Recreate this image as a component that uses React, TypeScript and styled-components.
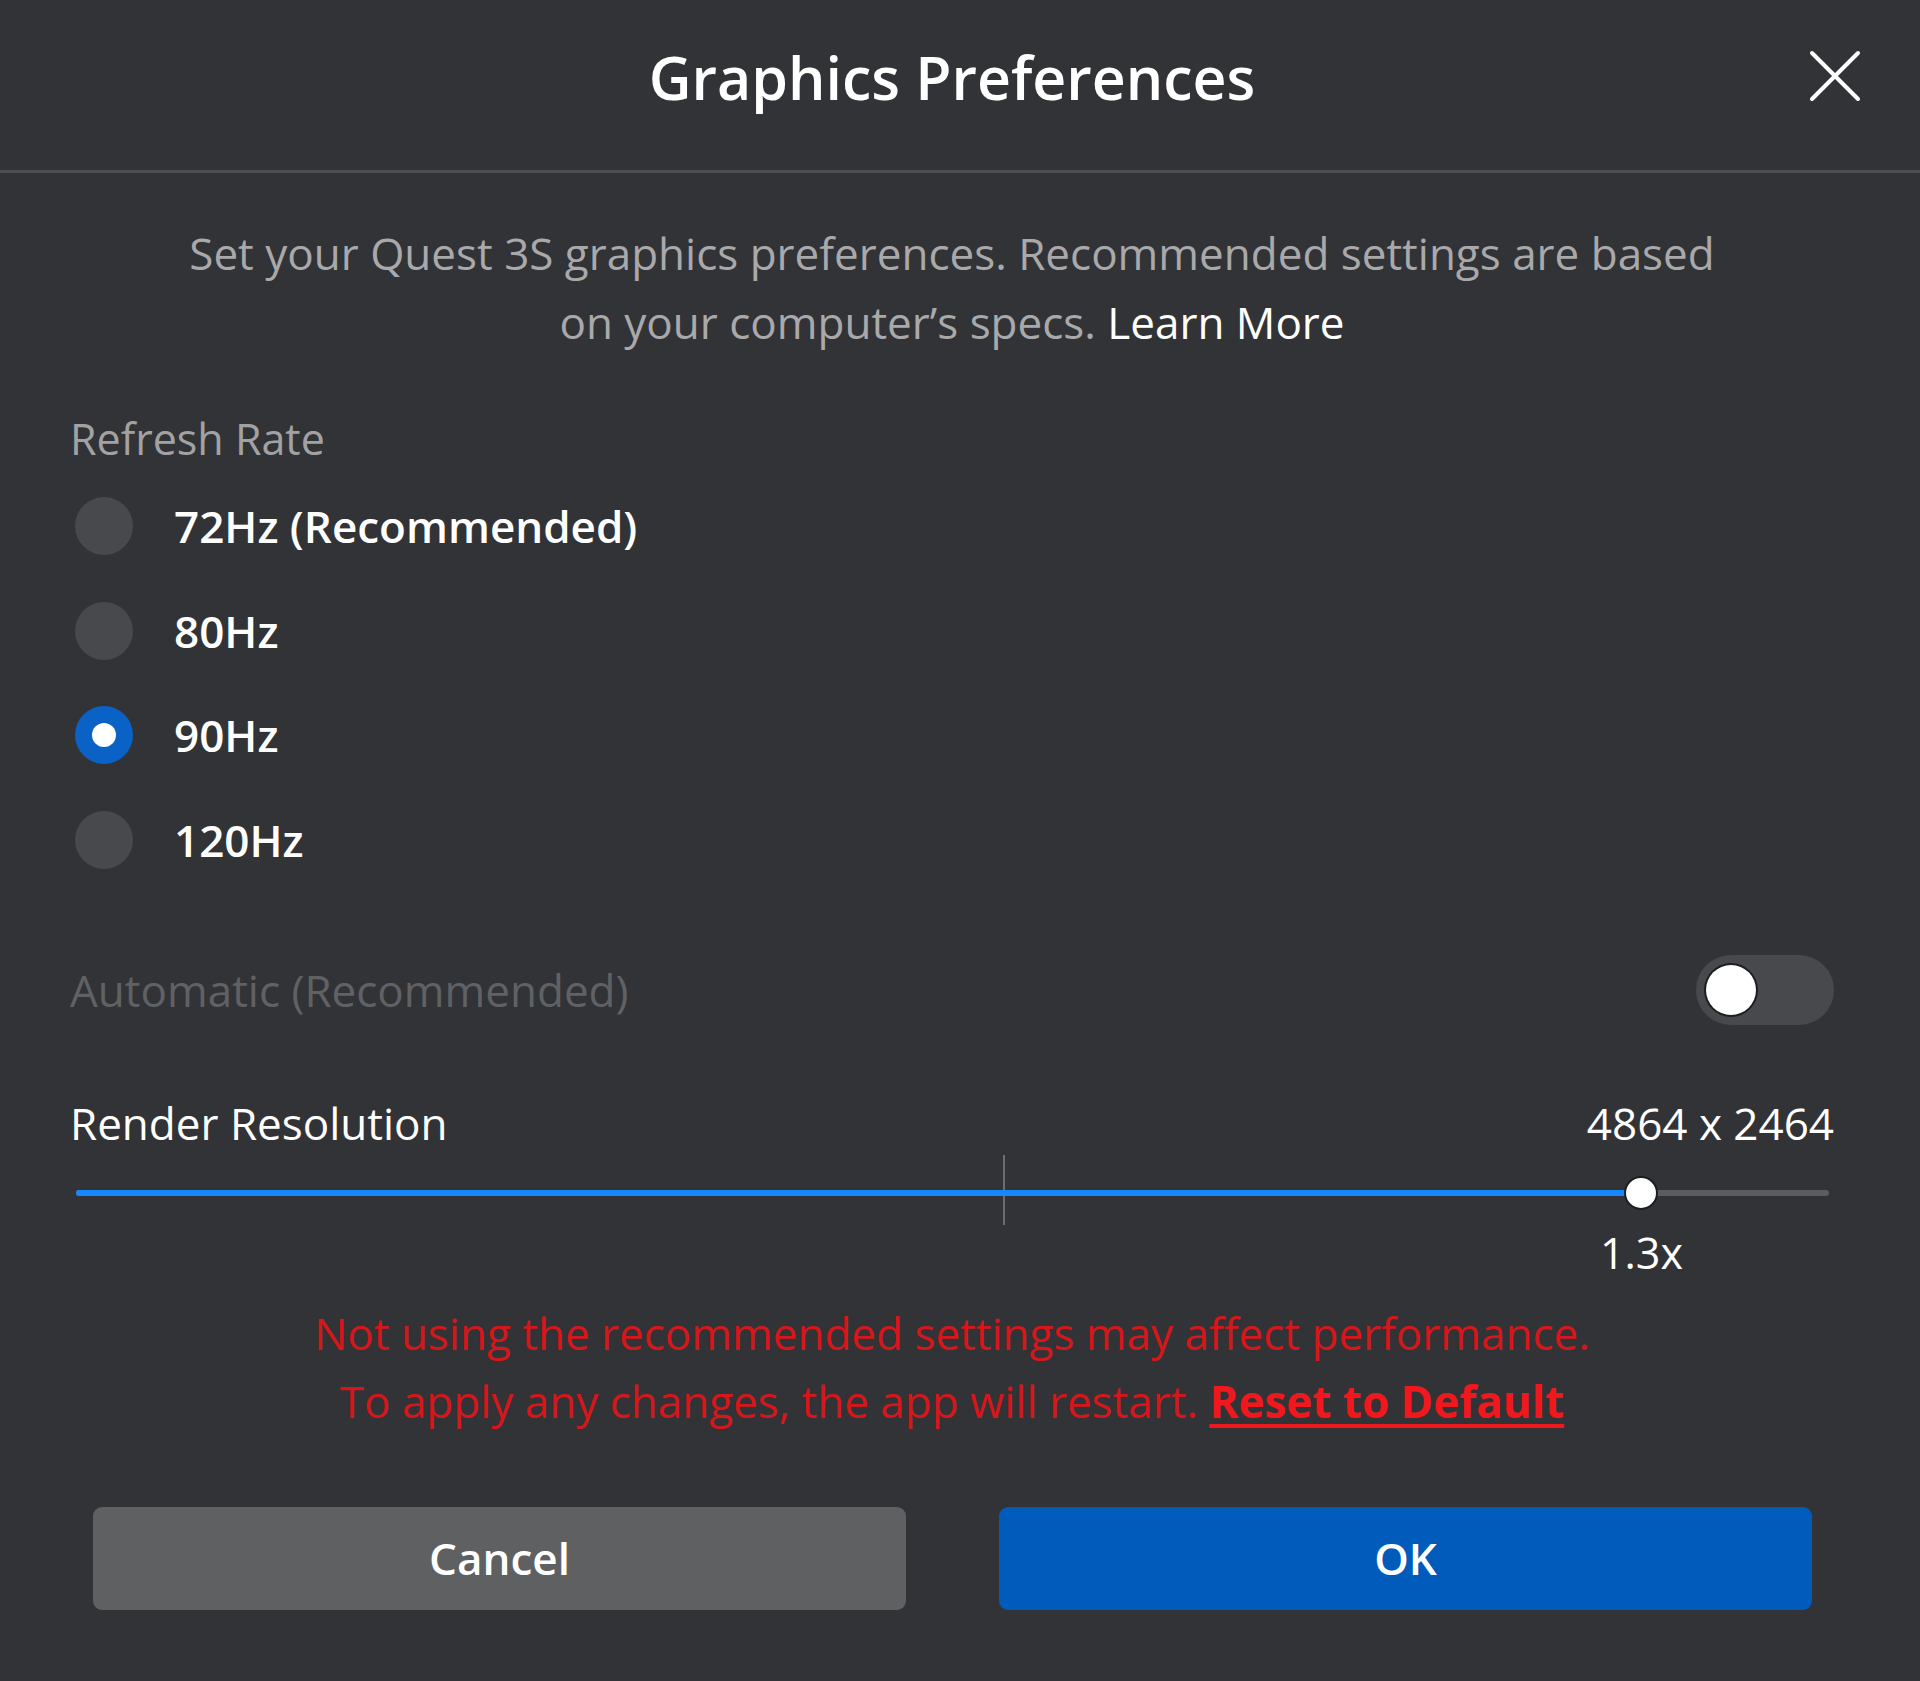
import { createGlobalStyle, styled } from "styled-components";

const GlobalStyle = createGlobalStyle`
  html, body {
    margin: 0;
    padding: 0;
    background: #323336;
  }
  body {
    font-family: "Open Sans", "Noto Sans", sans-serif;
    color: #ffffff;
  }
`;

const Dialog = styled.div`
  width: 1920px;
  min-height: 1681px;
  display: flex;
  flex-direction: column;
  background: #323336;
`;

const Header = styled.header`
  height: 173px;
  box-sizing: border-box;
  border-bottom: 3px solid #4d4e50;
  display: grid;
  grid-template-columns: 1fr auto 1fr;
  align-items: start;
  padding: 37px 86px 0 70px;
`;

const Title = styled.h1`
  grid-column: 2;
  margin: 0;
  font-size: 59px;
  line-height: 80px;
  font-weight: 600;
  color: #ffffff;
`;

const CloseButton = styled.button`
  grid-column: 3;
  justify-self: end;
  margin: 12px -28px 0 0;
  width: 54px;
  height: 54px;
  padding: 0;
  border: none;
  background: transparent;
  display: flex;
  cursor: pointer;
`;

const Body = styled.main`
  display: flex;
  flex-direction: column;
  padding: 0 86px 0 70px;
`;

const Description = styled.p`
  margin: 45.5px 0 0;
  text-align: center;
  font-size: 44px;
  line-height: 69px;
  color: #a9a9ab;
`;

const LinkText = styled.span`
  color: #ffffff;
`;

const SectionLabel = styled.div`
  margin-top: 54px;
  font-size: 43px;
  line-height: 56px;
  color: #a2a2a4;
`;

const RadioList = styled.div`
  display: flex;
  flex-direction: column;
  gap: 46.6px;
  margin-top: 30.5px;
`;

const RadioRow = styled.label`
  display: flex;
  align-items: center;
  gap: 41px;
  height: 58px;
  padding-left: 5px;
  font-size: 44px;
  font-weight: 600;
  color: #ffffff;
`;

const RadioCircle = styled.span<{ $checked?: boolean }>`
  width: 58px;
  height: 58px;
  flex: none;
  border-radius: 50%;
  background: ${(p) => (p.$checked ? "#0a62c6" : "#48494c")};
  display: flex;
  align-items: center;
  justify-content: center;
`;

const RadioDot = styled.span`
  width: 24px;
  height: 24px;
  border-radius: 50%;
  background: #ffffff;
`;

const ToggleRow = styled.div`
  margin-top: 86px;
  display: flex;
  align-items: center;
  justify-content: space-between;
  height: 70px;
`;

const MutedLabel = styled.span`
  font-size: 44px;
  color: #606164;
`;

const ToggleTrack = styled.div<{ $on?: boolean }>`
  width: 138px;
  height: 70px;
  box-sizing: border-box;
  border-radius: 35px;
  background: ${(p) => (p.$on ? "#0a62c6" : "#48494c")};
  display: flex;
  align-items: center;
  justify-content: ${(p) => (p.$on ? "flex-end" : "flex-start")};
  padding: 0 10px;
`;

const ToggleKnob = styled.span`
  width: 50px;
  height: 50px;
  border-radius: 50%;
  background: #ffffff;
  box-shadow: 0 0 0 2px #1d1e20;
`;

const ResolutionHeader = styled.div`
  margin-top: 70px;
  display: flex;
  justify-content: space-between;
  align-items: center;
  font-size: 44px;
  line-height: 56px;
  color: #ffffff;
`;

const Slider = styled.div`
  position: relative;
  margin: 7px 5px 0 6px;
  height: 70px;
  display: flex;
  align-items: center;
`;

const Track = styled.div`
  position: relative;
  width: 100%;
  height: 6px;
  border-radius: 3px;
  background: #5b5c5e;
`;

const Fill = styled.div`
  height: 100%;
  border-radius: 3px;
  background: #1687ff;
`;

const Tick = styled.div`
  position: absolute;
  top: -3px;
  bottom: 3px;
  width: 2px;
  background: #6c6d70;
`;

const Thumb = styled.div`
  position: absolute;
  top: 50%;
  width: 30px;
  height: 30px;
  border-radius: 50%;
  background: #ffffff;
  box-shadow: 0 0 0 2px #1d1e20;
  transform: translate(-50%, -50%);
`;

const SliderValueRow = styled.div`
  position: relative;
  height: 50px;
  margin: 0 5px 0 6px;
`;

const SliderValue = styled.span`
  position: absolute;
  top: 0;
  transform: translateX(-50%);
  font-size: 43px;
  line-height: 50px;
  color: #ffffff;
`;

const Warning = styled.p`
  margin: 21px 0 0;
  text-align: center;
  font-size: 44px;
  line-height: 68px;
  color: #d5161b;
`;

const ResetLink = styled.a`
  font-weight: 700;
  color: #f0171d;
  text-decoration: underline;
  text-decoration-thickness: 4px;
  text-underline-offset: 6px;
`;

const Footer = styled.footer`
  margin-top: 72px;
  display: grid;
  grid-template-columns: 1fr 1fr;
  gap: 93px;
  padding: 0 22px 0 23px;
`;

const Button = styled.button<{ $primary?: boolean }>`
  height: 103px;
  border: none;
  border-radius: 9px;
  background: ${(p) => (p.$primary ? "#005bbb" : "#5f6062")};
  color: #ffffff;
  font-family: inherit;
  font-size: 44px;
  font-weight: 600;
  cursor: pointer;
`;

const rates = [
  { label: "72Hz (Recommended)", checked: false },
  { label: "80Hz", checked: false },
  { label: "90Hz", checked: true },
  { label: "120Hz", checked: false },
];

const sliderValue = 0.893;
const sliderMid = 0.529;

export default function App() {
  return (
    <>
      <GlobalStyle />
      <Dialog>
        <Header>
          <Title>Graphics Preferences</Title>
          <CloseButton aria-label="Close">
            <svg width="54" height="54" viewBox="0 0 54 54">
              <path d="M4 4 L50 50 M50 4 L4 50" stroke="#ffffff" strokeWidth="4" strokeLinecap="round" />
            </svg>
          </CloseButton>
        </Header>

        <Body>
          <Description>
            Set your Quest 3S graphics preferences. Recommended settings are based
            <br />
            on your computer’s specs. <LinkText>Learn More</LinkText>
          </Description>

          <SectionLabel>Refresh Rate</SectionLabel>
          <RadioList>
            {rates.map((r) => (
              <RadioRow key={r.label}>
                <RadioCircle $checked={r.checked}>{r.checked && <RadioDot />}</RadioCircle>
                {r.label}
              </RadioRow>
            ))}
          </RadioList>

          <ToggleRow>
            <MutedLabel>Automatic (Recommended)</MutedLabel>
            <ToggleTrack>
              <ToggleKnob />
            </ToggleTrack>
          </ToggleRow>

          <ResolutionHeader>
            <span>Render Resolution</span>
            <span>4864 x 2464</span>
          </ResolutionHeader>

          <Slider>
            <Tick style={{ left: `${sliderMid * 100}%` }} />
            <Track>
              <Fill style={{ width: `${sliderValue * 100}%` }} />
              <Thumb style={{ left: `${sliderValue * 100}%` }} />
            </Track>
          </Slider>
          <SliderValueRow>
            <SliderValue style={{ left: `${sliderValue * 100}%` }}>1.3x</SliderValue>
          </SliderValueRow>

          <Warning>
            Not using the recommended settings may affect performance.
            <br />
            To apply any changes, the app will restart. <ResetLink>Reset to Default</ResetLink>
          </Warning>

          <Footer>
            <Button>Cancel</Button>
            <Button $primary>OK</Button>
          </Footer>
        </Body>
      </Dialog>
    </>
  );
}
